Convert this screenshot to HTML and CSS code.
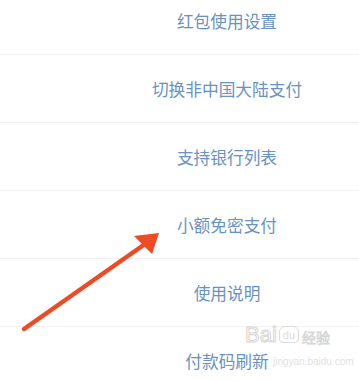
FILE: index.html
```html
<!DOCTYPE html>
<html lang="zh">
<head>
<meta charset="utf-8">
<link rel="stylesheet" href="styles.css">
</head>
<body>
<div class="page">
  <ul class="menu">
    <li class="item">红包使用设置</li>
    <li class="item">切换非中国大陆支付</li>
    <li class="item">支持银行列表</li>
    <li class="item">小额免密支付</li>
    <li class="item">使用说明</li>
    <li class="item">付款码刷新</li>
  </ul>
  <svg class="arrow" width="359" height="382" viewBox="0 0 359 382">
    <line x1="24" y1="329" x2="145" y2="244" stroke="#ee4a24" stroke-width="4.5" stroke-linecap="round"/>
    <polygon points="159,233 134,236 152,254" fill="#ee4a24"/>
  </svg>
  <div class="watermark">
    <div class="wm-top"><span class="wm-bai">Bai</span><span class="wm-paw">du</span><span class="wm-jy">经验</span></div>
    <div class="wm-url">jingyan.baidu.com</div>
  </div>
</div>
</body>
</html>
```
FILE: styles.css
```css
html, body {
  margin: 0;
  padding: 0;
  background: #ffffff;
}
.page {
  position: relative;
  width: 359px;
  height: 382px;
  overflow: hidden;
  font-family: "Noto Sans CJK SC", "Noto Sans", sans-serif;
}
.menu {
  list-style: none;
  margin: -13px 0 0 0;
  padding: 0;
}
.item {
  height: 67px;
  border-bottom: 1px solid #f1f1f1;
  display: flex;
  align-items: center;
  justify-content: center;
  padding-left: 95px;
  font-size: 16.7px;
  color: #6892c4;
  letter-spacing: 0;
}
.arrow {
  position: absolute;
  left: 0;
  top: 0;
}
.watermark {
  position: absolute;
  left: 245px;
  top: 314px;
  color: #dcdcdc;
  font-family: "Liberation Sans", sans-serif;
}
.wm-top {
  display: flex;
  align-items: flex-end;
  height: 32px;
}
.wm-bai {
  font-size: 22px;
  line-height: 22px;
  color: transparent;
  -webkit-text-stroke: 1px #d6d6d6;
}
.wm-paw {
  font-size: 11px;
  line-height: 12px;
  border: 1px solid #dcdcdc;
  border-radius: 6px 6px 4px 4px;
  padding: 2px 3px 1px;
  margin: 0 3px 3px 2px;
}
.wm-jy {
  font-family: "Noto Sans CJK SC", sans-serif;
  font-size: 14px;
  line-height: 18px;
  color: transparent;
  -webkit-text-stroke: 0.8px #d6d6d6;
}
.wm-url {
  font-size: 10px;
  line-height: 12px;
  margin-left: 28px;
  margin-top: 10px;
  color: #e2e2e2;
}
```
